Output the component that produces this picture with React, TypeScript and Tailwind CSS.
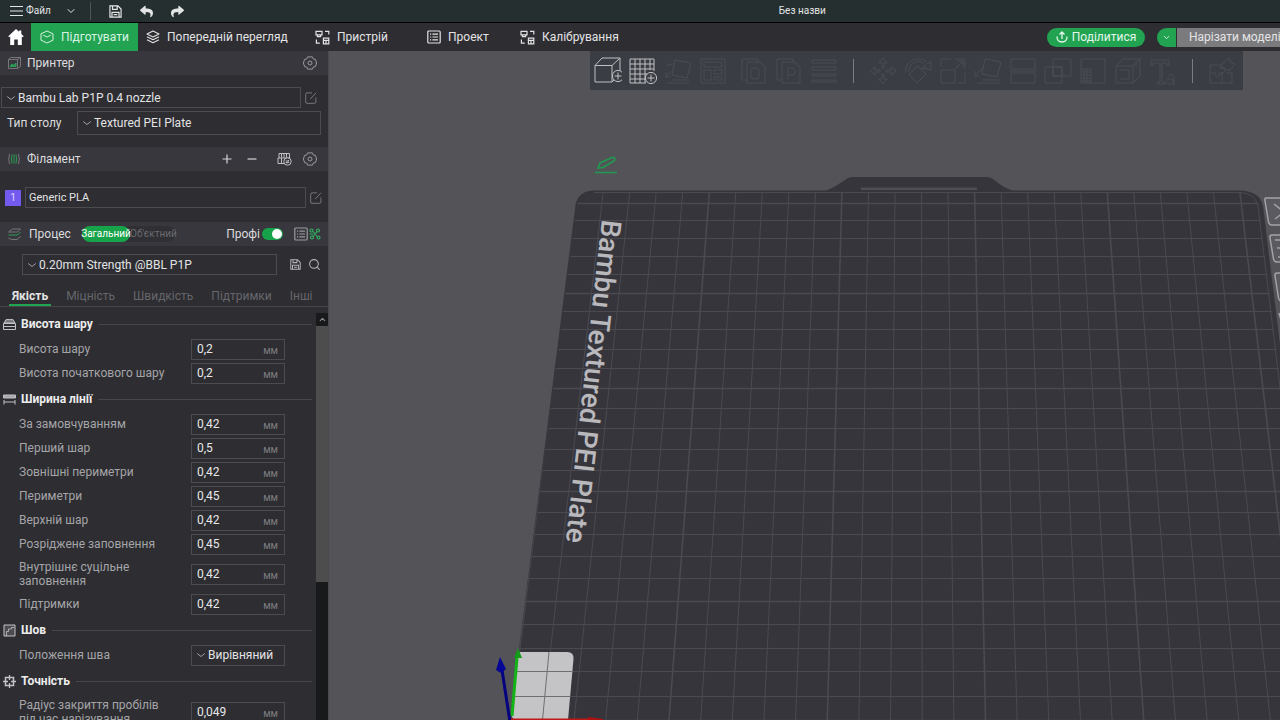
import React, { useState } from 'react';
import { ChevronDown, Search } from 'lucide-react';
import { FaReply, FaShare } from 'react-icons/fa';

/* ---------- icons ---------- */

const GearIcon = () => (
    <svg viewBox="0 0 14 14" className="w-3.5 h-3.5 shrink-0 text-[#9a9a9e]" fill="none" stroke="currentColor" strokeLinejoin="round">
        <path d="M4.600 .9h4.800l1 2.200 2 .3L13.600 7l-1.200 3.600-2 .3-1 2.200H4.600l-1-2.200-2-.3L.4 7l1.200-3.600 2-.3z" />
        <circle cx="7" cy="7" r="2" />
    </svg>
);

const EditIcon = () => (
    <svg viewBox="0 0 12 12" className="w-3 h-3 shrink-0 text-[#77777b]" fill="none" stroke="currentColor">
        <path d="M7 .9H2Q.7.9.7 2.2V10q0 1.3 1.3 1.3h7.6q1.3 0 1.3-1.3V5.5M5.2 7.2L11 .8" />
    </svg>
);

const SaveIcon = ({ className }: { className: string }) => (
    <svg viewBox="0 0 14 14" className={className} fill="none" stroke="currentColor" strokeWidth="1.3">
        <path d="M1 1h8.6L13 4.4V13H1zM3.8 1v3.6h5V1M3.2 13V8h7.6v5M5 10.4h4" />
    </svg>
);

const DeviceIcon = () => (
    <svg viewBox="0 0 15 15" className="w-[15px] h-[15px]" fill="none" stroke="currentColor" strokeWidth="1.2">
        <path d="M1 1.4h6v3.4H1zM2.4 5v1.6h3.2V5M10 1.4h3.8v3.2M1.4 9.6v3.6h3.4M8.4 8.2h5.4v5.6H8.4zM8.4 10.4h5.4M11 10.4v3.4" />
    </svg>
);

const ProjectIcon = () => (
    <svg viewBox="0 0 14 14" className="w-3.5 h-3.5 shrink-0" fill="none" stroke="currentColor" strokeWidth="1.2">
        <rect x=".8" y="1" width="12.4" height="12" rx="1" />
        <path d="M3 4.2h1.2M5.4 4.2H11M3 7h1.2M5.4 7H11M3 9.8h1.2M5.4 9.8H11" />
    </svg>
);

const LayersIcon = () => (
    <svg viewBox="0 0 14 14" className="w-3.5 h-3.5" fill="none" stroke="currentColor" strokeWidth="1.1" strokeLinejoin="round">
        <path d="M7 1l6 3-6 3-6-3zM1 6.8l6 3 6-3M1 9.8l6 3 6-3" />
    </svg>
);

const CubeIcon = () => (
    <svg viewBox="0 0 14 14" className="w-3.5 h-3.5" fill="none" stroke="currentColor" strokeWidth="1" strokeLinejoin="round">
        <path d="M7 1l6 2.8v6.4L7 13l-6-2.8V3.8zM3.2 5.2L7 7l3.8-1.8" />
    </svg>
);

const HomeIcon = () => (
    <svg viewBox="0 0 16 16" className="w-4 h-4" fill="currentColor">
        <path d="M8 0L.3 7.2l.9 1L2.2 7.4V16h4v-5.4h3.6V16h4V7.4l1 .8.9-1-2.4-2.3V1.4h-2.2v1.4z" />
    </svg>
);

const toolIcons: Record<string, React.ReactNode> = {
    add: (
        <>
            <path d="M1 8.5h17V25H1zM1 8.500L8 1h18l-8 7.500M26 1v13M18 25l2-2" />
            <circle cx="24" cy="19" r="5.6" />
            <path d="M24 15.5v7M20.5 19h7" />
        </>
    ),
    plate: (
        <>
            <path d="M1 2h24v12M1 2v24h16M6 2v24M11 2v24M16 2v24M21 2v11M1 7h24M1 12h24M1 17h17M1 22h16" />
            <circle cx="22" cy="21" r="5.6" />
            <path d="M22 17.500v7M18.500 21h7" />
        </>
    ),
    orient: <path d="M11 3l16 3-4 15-15-3zM3 26h22M8 23h17M2 20l5-6M2 20v-5M2 20h5M2 9l4-2 3 2" />,
    arrange: <path d="M2 2h24v24H2zM5 5h18v5H5zM5 13h7v10H5zM15 13h8v4h-8zM15 20h8v3h-8z" />,
    copyO: <path d="M6 23H2V2h16v3M7 5h13l5 5v16H7zM13 11h4l2 2v7l-2 2h-4l-2-2v-7z" />,
    copyP: <path d="M6 23H2V2h16v3M7 5h13l5 5v16H7zM13 22V11h5l2 2v3l-2 2h-5" />,
    lines: <path d="M2 3h24v3H2zM2 10h24v3H2zM2 17h24v2H2zM2 23h24v2H2z" />,
    move: <path d="M14 1l4 5h-3v5h-2V6h-3zM14 27l4-5h-3v-5h-2v5h-3zM1 14l5-4v3h5v2H6v3zM27 14l-5-4v3h-5v2h5v3z" />,
    rotate: <path d="M14 9l8 8-9 9-8-9zM2 15C0 3 17-3 24 7M24 7l3-3v9l-9-2 4-2C15 0 4 6 5 15" />,
    scale: <path d="M2 13h14v13H2zM2 10V2h10M16 2h10v10M26 16v10h-7M16 12l8-8M18 4h6v6" />,
    face: <path d="M11 2l16 3-4 15-15-3zM3 26h23M8 23h18M1 19l7-8M1 19v-5M1 19h5" />,
    cut: <path d="M2 12V2h24v10zM2 16h24v10H2zM0 14h28" />,
    bool: <path d="M9 2h18v17H9zM1 10h17v16H1zM9 10h9v9H9z" />,
    support: <path d="M2 2h24v24H12V12H2zM2 12v14h10M2 15h10M2 18h10M2 21h10M2 24h10M5 12v14M8 12v14" />,
    seam: <path d="M2 9h17v17H2zM2 9l7-7h17l-7 7M26 2v17l-7 7M6 13h9v9H6M22 6v4" />,
    text: <path d="M2 3h18v5h-2V6h-5v19h3v2H8v-2h3V6H4v2H2zM19 27c-3-1-2-5 1-5h4v5h-5M19 19c2-3 6-2 6 1v8" />,
    assembly: <path d="M2 8h11v4c4-3 6 3 1 4v10H2zM2 16h6c-2 5 4 5 3 0h4M14 26h10V16h-6M15 6l6-5 1 4 5 2-6 7-4-2-4-3z" />,
};

const ToolIcon = ({ name }: { name: string }) => (
    <svg viewBox="0 0 28 28" className="w-7 h-7" fill="none" stroke="currentColor">{toolIcons[name]}</svg>
);

const tools = [
    ['add', 'plate', 'orient', 'arrange'],
    ['copyO', 'copyP', 'lines'],
    ['move', 'rotate', 'scale', 'face', 'cut', 'bool', 'support', 'seam', 'text'],
    ['assembly'],
];

/* ---------- sidebar ---------- */

interface Field {
    label: string;
    value: string;
    select?: boolean;
}

const sections: { title: string; icon: React.ReactNode; fields: Field[] }[] = [
    {
        title: 'Висота шару',
        icon: <><path d="M1 5l2-3.400h7L12 5z" fill="#77777b" /><path d="M.5 5.500h12v6H.5zM.5 8.500h12" /></>,
        fields: [
            { label: 'Висота шару', value: '0,2' },
            { label: 'Висота початкового шару', value: '0,2' },
        ],
    },
    {
        title: 'Ширина лінії',
        icon: <><path d="M.5 2h12v3H.5z" fill="#a8a8aa" /><path d="M1 7v4.500M12 7v4.500M1 9h11" /></>,
        fields: [
            { label: 'За замовчуванням', value: '0,42' },
            { label: 'Перший шар', value: '0,5' },
            { label: 'Зовнішні периметри', value: '0,42' },
            { label: 'Периметри', value: '0,45' },
            { label: 'Верхній шар', value: '0,42' },
            { label: 'Розріджене заповнення', value: '0,45' },
            { label: 'Внутрішнє суцільне заповнення', value: '0,42' },
            { label: 'Підтримки', value: '0,42' },
        ],
    },
    {
        title: 'Шов',
        icon: <><path d="M1 1h11v11H1z" fill="#4c4c50" /><path d="M3.500 12V7.500h2V5h3V3.500H11" strokeWidth=".8" /></>,
        fields: [{ label: 'Положення шва', value: 'Вирівняний', select: true }],
    },
    {
        title: 'Точність',
        icon: <><rect x="2.500" y="2.500" width="8" height="8" strokeWidth="1.500" /><path d="M6.500 0v5M6.500 8v5M0 6.500h5M8 6.500h5" strokeWidth="1.300" /></>,
        fields: [{ label: 'Радіус закриття пробілів під час нарізування', value: '0,049' }],
    },
];

const Dropdown = ({ id, value, label, className }: { id: string; value: string; label?: string; className: string }) => (
    <div className={`flex items-center border border-[#4b4b50] text-[#e3e3e4] ${className}`}>
        <svg viewBox="0 0 10 10" className="w-2.5 h-2.5 shrink-0" fill="none" stroke="#a0a0a4">
            <path d="M1.200 3.500L5 6.500l3.800-3" />
        </svg>
        <select id={id} aria-label={label} className="appearance-none bg-transparent outline-none flex-1 min-w-0 h-full">
            <option>{value}</option>
        </select>
    </div>
);

const PanelHeader = ({ children }: { children: React.ReactNode }) => (
    <div className="h-6 shrink-0 flex items-center bg-[#37373d] pl-2 pr-[11px] text-[#dcdcde]">{children}</div>
);

const FieldRow = ({ id, field }: { id: string; field: Field }) => (
    <div className="min-h-6 flex items-center pl-[19px]">
        <label htmlFor={id} className="w-[172px] pr-5 py-1 leading-[14px] text-[#a5a5a8]">{field.label}</label>
        {field.select ? (
            <Dropdown id={id} value={field.value} className="w-[94px] h-[21px] pl-1 gap-0.5" />
        ) : (
            <div className="w-[94px] h-[21px] flex items-center border border-[#4b4b50] pl-[5px] pr-1.5">
                <input id={id} defaultValue={field.value} className="flex-1 min-w-0 bg-transparent outline-none text-[#e8e8e9]" />
                <span className="text-[10px] leading-3 pt-1 text-[#7d7d81]">мм</span>
            </div>
        )}
    </div>
);

const Sidebar = () => {
    const [tab, setTab] = useState('Якість');
    return (
        <aside className="w-[329px] shrink-0 flex flex-col bg-[#2d2d32] border-r border-[#4a4a4f] min-h-0">
            <PanelHeader>
                <svg viewBox="0 0 13 12" className="w-[13px] h-3" fill="none" stroke="#77777b">
                    <path d="M.5 2.500h9v9h-9zM.5 2.500l2-2h10v9l-3 2M9.500 2.500l3-2" />
                    <path d="M2 9.500l2-2.500 2 1.500L8 6v3.500z" fill="#2a9d55" stroke="#2a9d55" />
                </svg>
                <span className="ml-1.5 flex-1">Принтер</span>
                <button aria-label="Налаштування принтера"><GearIcon /></button>
            </PanelHeader>
            <div className="pt-3 pb-3 flex flex-col gap-[3px]">
                <div className="flex items-center pl-px gap-1">
                    <Dropdown id="printer" label="Принтер" value="Bambu Lab P1P 0.4 nozzle" className="w-[300px] h-[21px] pl-1 gap-0.5" />
                    <button aria-label="Редагувати"><EditIcon /></button>
                </div>
                <div className="flex items-center pl-[7px] pr-[7px]">
                    <label htmlFor="bed" className="w-[70px] text-[#dcdcde]">Тип столу</label>
                    <Dropdown id="bed" value="Textured PEI Plate" className="flex-1 h-6 pl-1 gap-0.5" />
                </div>
            </div>
            <PanelHeader>
                <svg viewBox="0 0 12 12" className="w-3 h-3" fill="none" stroke="#77777b">
                    <path d="M1.500 1q-1.500 5 0 10M10.500 1q1.500 5 0 10" />
                    <path d="M4 1.500q-1 4.500 0 9M6 1.500v9M8 1.500q1 4.500 0 9" stroke="#2a9d55" />
                </svg>
                <span className="ml-[7px] flex-1">Філамент</span>
                <div className="flex items-center gap-[15px]">
                    <button aria-label="Додати"><svg viewBox="0 0 10 10" className="w-2.5 h-2.5" stroke="#d6d6d8" strokeWidth="1.200"><path d="M5 .5v9M.5 5h9" /></svg></button>
                    <button aria-label="Видалити"><svg viewBox="0 0 10 10" className="w-2.5 h-2.5" stroke="#d6d6d8" strokeWidth="1.200"><path d="M.5 5h9" /></svg></button>
                </div>
                <button aria-label="AMS" className="ml-5">
                    <svg viewBox="0 0 15 14" className="w-[15px] h-3.5" fill="none" stroke="#c0c0c3">
                        <path d="M8 11.500H1V6h12M2 6V1.500h10.500V6M4.500 1.500v4M7 1.500v4M9.500 1.500v4M4.500 6v5.500" />
                        <circle cx="10.500" cy="9.500" r="3.700" fill="#37373d" />
                        <path d="M8.800 9h3.200l-1-1M12.200 10.400H9l1 1" />
                    </svg>
                </button>
                <button aria-label="Налаштування філаменту" className="ml-[11px]"><GearIcon /></button>
            </PanelHeader>
            <div className="flex items-center pl-[5px] pt-4 pb-3.5 gap-1">
                <button className="w-4 h-4 bg-[#7459ee] text-[#d8d0ff] text-[11px] leading-4">1</button>
                <input aria-label="Філамент" defaultValue="Generic PLA" className="w-[281px] h-[21px] border border-[#4b4b50] bg-transparent outline-none px-[3px] text-[11px] text-[#e3e3e4]" />
                <button aria-label="Редагувати"><EditIcon /></button>
            </div>
            <PanelHeader>
                <svg viewBox="0 0 13 12" className="w-[13px] h-3" fill="none" stroke="#77777b" strokeLinejoin="round">
                    <path d="M.5 4l4-3h8l-3 3zM.5 10l3 1.500H9l3.500-3" />
                    <path d="M.5 7h9l3-3" stroke="#2a9d55" />
                </svg>
                <span className="ml-2 w-[42px]">Процес</span>
                <div className="ml-[11px] w-[93px] h-4 flex rounded-full bg-[#2f2f34] text-[10px] leading-4">
                    <button className="w-12 rounded-full bg-[#17a349] text-white flex justify-center whitespace-nowrap">Загальний</button>
                    <button className="flex-1 text-[#6b6b70] flex justify-center whitespace-nowrap">Об'єктний</button>
                </div>
                <label htmlFor="expert" className="ml-auto">Профі</label>
                <input id="expert" type="checkbox" role="switch" defaultChecked className="ml-0.5 w-[21px] h-3 appearance-none rounded-full bg-[#6b6b70] checked:bg-[#17a349] before:block before:w-2.5 before:h-2.5 before:m-px before:rounded-full before:bg-white checked:before:ml-2.5" />
                <button aria-label="Список" className="ml-[11px] text-[#9a9a9e]"><ProjectIcon /></button>
                <button aria-label="Порівняти" className="-mr-1 ml-px">
                    <svg viewBox="0 0 12 12" className="w-3 h-3" fill="none" stroke="#35ad62" strokeWidth="1.200">
                        <circle cx="2.500" cy="2.500" r="1.500" /><circle cx="9" cy="2.500" r="1.500" />
                        <circle cx="3" cy="9.500" r="1.500" /><circle cx="9.500" cy="9.500" r="1.500" />
                        <path d="M4 3.500l4 5M8 3.500l-4 5M.5 6H4" />
                    </svg>
                </button>
            </PanelHeader>
            <div className="flex items-center pl-[22px] pr-[7px] pt-2 pb-2">
                <Dropdown id="preset" label="Процес" value="0.20mm Strength @BBL P1P" className="w-[255px] h-[21px] pl-1 gap-0.5" />
                <button aria-label="Зберегти профіль" className="ml-[13px]"><SaveIcon className="w-[11px] h-[11px] text-[#b4b4b7]" /></button>
                <button aria-label="Пошук" className="ml-auto"><Search size={13} strokeWidth={2} className="text-[#b4b4b7]" /></button>
            </div>
            <nav className="flex gap-[18px] pl-3 border-b border-[#46464b]">
                {['Якість', 'Міцність', 'Швидкість', 'Підтримки', 'Інші'].map((name) => (
                    <button
                        key={name}
                        onClick={() => setTab(name)}
                        className={`h-[23px] pt-1 border-b-2 -mx-[3px] px-[3px] ${tab === name ? 'font-bold text-[#e3e3e4] border-[#22a352]' : 'text-[#66666b] border-transparent'}`}
                    >
                        {name}
                    </button>
                ))}
            </nav>
            <div className="flex-1 min-h-0 flex">
                <div className="flex-1 min-w-0 overflow-hidden pt-1 flex flex-col gap-px">
                    {sections.map((section, s) => (
                        <section key={section.title} className="shrink-0">
                            <h3 className="h-[26px] flex items-center pl-[3px] pr-1 font-bold text-[#ececed]">
                                <svg viewBox="0 0 13 13" className="w-[13px] h-[13px]" fill="none" stroke="#c4c4c6">{section.icon}</svg>
                                <span className="ml-[5px] mr-1.5">{section.title}</span>
                                <span className="flex-1 h-px bg-[#46464b]" />
                            </h3>
                            {section.fields.map((field, f) => (
                                <FieldRow key={field.label} id={`field-${s}-${f}`} field={field} />
                            ))}
                        </section>
                    ))}
                </div>
                <div className="w-3 mt-1.5 bg-[#18191a] flex flex-col">
                    <button aria-label="Вгору" className="h-[13px] flex items-center justify-center text-[#8a8a8d]">
                        <ChevronDown size={9} strokeWidth={3} className="rotate-180" />
                    </button>
                    <div className="h-[63%] bg-[#4d4d4d]" />
                </div>
            </div>
        </aside>
    );
};

/* ---------- build plate ---------- */

const rows = [203, 220, 238, 256, 274, 293, 311, 329, 349, 368, 388, 408, 428, 449, 470, 491, 512, 534, 556, 578, 601, 624, 648, 671, 696, 720];
const columns = Array.from({ length: 27 }, (_, i) => i - 5);
const plateShape = 'M508 735L575.500 205Q578 191 594 190.500L826 190.500Q832 189 848 178Q850 177 854 177H986Q990 177 993 179Q1006 190 1014 190.500L1240 190.500Q1260 191 1263 206L1328 735z';

const Scene = () => (
    <svg viewBox="329 51 951 669" preserveAspectRatio="xMinYMin slice" className="absolute inset-0 w-full h-full">
        <clipPath id="plate"><path d="M508 735L577 205Q580 192 594 192L1240 192Q1257 193 1259 206L1324 735z" /></clipPath>
        <path d={plateShape} fill="#36353b" />
        <path d="M861 187.500h116v2.500H861z" fill="#4e4d53" />
        <g clipPath="url(#plate)" stroke="#4b4a51" fill="none">
            {rows.map((y, i) => (
                <path key={y} d={`M500 ${y + 0.5}H1340`} strokeWidth={i % 5 === 0 ? 1.6 : 1} />
            ))}
            {columns.map((i) => (
                <path key={i} d={`M${709.3 + 26.53 * i} 192L${669 + 31.65 * i} 720`} strokeWidth={i % 5 === 0 ? 1.6 : 1} />
            ))}
        </g>
        <path d="M594 192.500L1240 192.500Q1255 193 1258 206L1322 735" fill="none" stroke="#4b4a51" />

        <text x="602" y="219" transform="rotate(96.4 602 219)" fill="#b9b8bc" className="font-['Roboto',sans-serif] text-[28px] font-medium">
            Bambu Textured PEI Plate
        </text>

        {/* plate name edit */}
        <path d="M598 168L600 163L612 157.500Q616 157 614.500 160.500L603 167.500zM595 172.500H617" fill="none" stroke="#209a50" strokeWidth="1.700" />

        {/* plate buttons */}
        <g fill="#5b5a60" stroke="#a3a3a7" strokeWidth="1.500">
            <path d="M1266 198H1300V225H1272Q1269 225 1268.500 222L1265 201Q1264.500 198 1266 198z" />
            <path d="M1272 235H1300V262H1277Q1274 262 1273.500 259L1270 238Q1269.500 235 1272 235z" />
            <path d="M1277 273H1300V301H1282Q1279 301 1278.500 298L1275 276Q1274.500 273 1277 273z" />
            <path d="M1274 204L1284 212L1275 219M1275 240h6M1277 248h5M1278 257h5M1279 313l3 10" fill="none" />
        </g>

        <path d="M518 652H567Q574 652 573.500 659L568 720H515Q511 718 511.500 713z" fill="#c4c4c6" />
        <path d="M549 652L542.500 720M516 671.500H572M514 696.500H570" stroke="#6f6f73" />

        <path d="M512 716L517 658" stroke="#13b417" strokeWidth="3" />
        <path d="M518 648L522 658L514 658z" fill="#129a18" />
        <path d="M510 722L502 670" stroke="#04047e" strokeWidth="3" />
        <path d="M500 657L506 669L501 673L496 670z" fill="#060694" />
        <path d="M511 719.500H590" stroke="#c01616" strokeWidth="2" />
        <path d="M588 717L603 719V720H588z" fill="#b01010" />
    </svg>
);

const Viewport = () => (
    <main className="relative flex-1 min-w-0 bg-[#545358] overflow-hidden">
        <Scene />
        <div className="relative ml-[261px] mr-[37px] h-[39px] pl-1 flex items-center bg-[#3a3d43] text-[#4a4d54]">
            {tools.map((group, g) => (
                <React.Fragment key={g}>
                    {g > 1 && <span className="w-px h-6 mx-[15px] bg-[#7b7c80]" />}
                    <div className={`flex gap-[7px] ${g === 1 ? 'ml-[13px]' : ''}`}>
                        {group.map((name) => (
                            <button key={name} aria-label={name} className={name === 'add' || name === 'plate' ? 'text-[#bfc0c3]' : ''}>
                                <ToolIcon name={name} />
                            </button>
                        ))}
                    </div>
                </React.Fragment>
            ))}
        </div>
    </main>
);

export default function App() {
    return (
        <div className="h-screen flex flex-col overflow-hidden bg-[#2d2d32] font-['Roboto',sans-serif] text-[12px] leading-4">
            <header className="h-[23px] shrink-0 grid grid-cols-[61fr_39fr] items-center bg-[#262f30] border-b border-black text-[#e3e5e5] text-[10px]">
                <div className="flex items-center pl-2.5">
                    <button className="flex items-center gap-[3px]">
                        <svg viewBox="0 0 13 12" className="w-[13px] h-3" stroke="currentColor" strokeWidth="1.200"><path d="M0 1.500h13M0 6h13M0 10.500h13" /></svg>
                        Файл
                    </button>
                    <button aria-label="Меню" className="ml-3.5"><ChevronDown size={12} /></button>
                    <span className="ml-[13px] w-px h-[18px] bg-[#4c5454]" />
                    <button aria-label="Зберегти" className="ml-[18px]"><SaveIcon className="w-[13px] h-[13px]" /></button>
                    <button aria-label="Назад" className="ml-[18px]"><FaReply size={13} /></button>
                    <button aria-label="Вперед" className="ml-[18px]"><FaShare size={13} /></button>
                </div>
                <span className="-ml-0.5">Без назви</span>
            </header>

            <div className="h-7 shrink-0 flex items-center text-[#e3e3e4]">
                <button aria-label="Головна" className="w-[31px] flex justify-center text-white"><HomeIcon /></button>
                <button className="h-7 w-[107px] pl-[9px] flex items-center gap-[7px] bg-[#22a352] text-[#d8f3e1]"><CubeIcon />Підготувати</button>
                <button className="ml-2 w-[169px] flex items-center gap-[7px]"><LayersIcon />Попередній перегляд</button>
                <button className="w-28 flex items-center gap-[7px]"><DeviceIcon />Пристрій</button>
                <button className="w-[93px] flex items-center gap-[7px]"><ProjectIcon />Проект</button>
                <button className="flex items-center gap-[7px]"><DeviceIcon />Калібрування</button>
                <button className="ml-auto w-[98px] h-[19px] rounded-full bg-[#22a352] text-[#e4f7ea] flex items-center justify-center gap-1">
                    <svg viewBox="0 0 12 12" className="w-3 h-3" fill="none" stroke="currentColor" strokeWidth="1.300"><path d="M6 8V1M3.500 3.500L6 1l2.500 2.500M1 5.500q0 5.500 5 5.500t5-5.500" /></svg>
                    Поділитися
                </button>
                <button aria-label="Параметри нарізки" className="ml-3 w-[19px] h-[19px] rounded-l-full bg-[#22a352] text-white flex items-center justify-center"><ChevronDown size={9} /></button>
                <button className="ml-px w-[103px] h-[19px] pl-3 bg-[#7b7b7e] text-left whitespace-nowrap overflow-hidden">Нарізати моделі</button>
            </div>

            <div className="flex-1 min-h-0 flex">
                <Sidebar />
                <Viewport />
            </div>
        </div>
    );
}
